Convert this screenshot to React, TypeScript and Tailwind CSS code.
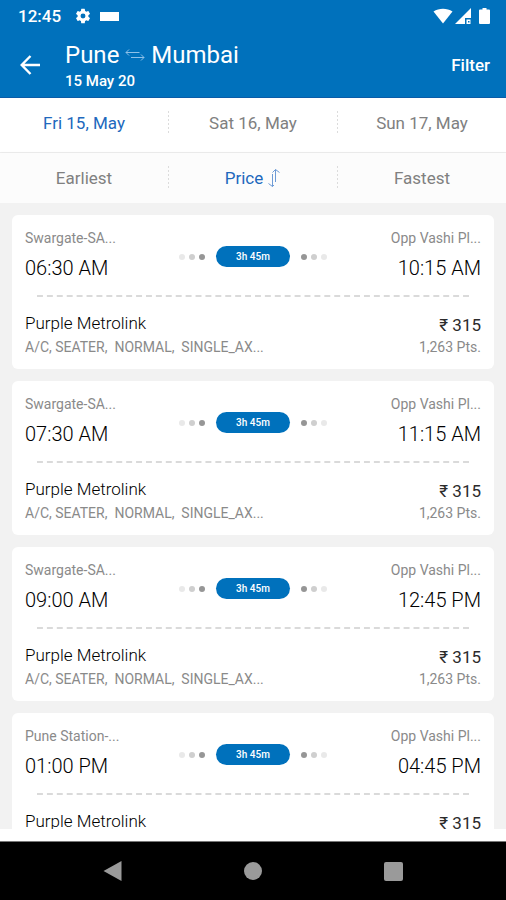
import React from 'react';

interface Trip {
  id: number;
  from: string;
  departs: string;
  to: string;
  arrives: string;
  duration: string;
  operator: string;
  features: string;
  price: string;
  points: string;
}

const base = {
  to: 'Opp Vashi Pl...',
  duration: '3h 45m',
  operator: 'Purple Metrolink',
  features: 'A/C, SEATER,  NORMAL,  SINGLE_AX...',
  price: '₹ 315',
  points: '1,263 Pts.',
};

const trips: Trip[] = [
  { ...base, id: 1, from: 'Swargate-SA...', departs: '06:30 AM', arrives: '10:15 AM' },
  { ...base, id: 2, from: 'Swargate-SA...', departs: '07:30 AM', arrives: '11:15 AM' },
  { ...base, id: 3, from: 'Swargate-SA...', departs: '09:00 AM', arrives: '12:45 PM' },
  { ...base, id: 4, from: 'Pune Station-...', departs: '01:00 PM', arrives: '04:45 PM' },
];

const StatusBar: React.FC = () => (
  <div className="flex h-8 items-center justify-between pl-[18px] pr-4 text-[17px] leading-5 font-medium">
    <div className="flex items-center">
      <span>12:45</span>
      <svg className="ml-[13px] h-[18px] w-[18px]" viewBox="0 0 24 24" fill="currentColor">
        <path d="M19.14 12.94c.04-.3.06-.61.06-.94s-.02-.64-.07-.94l2.03-1.58a.49.49 0 0 0 .12-.61l-1.92-3.32a.49.49 0 0 0-.59-.22l-2.39.96a7 7 0 0 0-1.62-.94l-.36-2.54A.48.48 0 0 0 13.92 2.4h-3.84a.47.47 0 0 0-.47.41l-.36 2.54c-.59.24-1.13.57-1.62.94l-2.39-.96a.48.48 0 0 0-.59.22L2.74 8.87a.47.47 0 0 0 .12.61l2.03 1.58c-.05.3-.09.63-.09.94s.02.64.07.94l-2.03 1.58a.49.49 0 0 0-.12.61l1.92 3.32c.12.22.37.29.59.22l2.39-.96c.5.38 1.03.7 1.62.94l.36 2.54c.05.24.24.41.48.41h3.84c.24 0 .44-.17.47-.41l.36-2.54c.59-.24 1.13-.56 1.62-.94l2.39.96c.22.08.47 0 .59-.22l1.92-3.32a.47.47 0 0 0-.12-.61zM12 15.3a3.3 3.3 0 1 1 0-6.6 3.3 3.3 0 0 1 0 6.6z" />
      </svg>
      <span className="ml-2 h-[9px] w-[19px] bg-white" />
    </div>
    <div className="flex items-center">
      <svg className="h-4 w-5" viewBox="0 0 20 16" fill="currentColor">
        <path d="M.5 3.500C6 -.2 14 -.2 19.500 3.500L10 15.500z" />
      </svg>
      <svg className="ml-[2px] h-4 w-4" viewBox="0 0 16 16" fill="currentColor">
        <path d="M16 0v10h-6v6H0z" />
        <path d="M11.500 11.500h4V16h-4zM13 13v1.500h1.500V13z" fillRule="evenodd" />
      </svg>
      <svg className="ml-2 h-4 w-[11px]" viewBox="0 0 11 16" fill="currentColor">
        <path d="M3.500 0h4v1.600H10a1 1 0 0 1 1 1V15a1 1 0 0 1-1 1H1a1 1 0 0 1-1-1V2.600a1 1 0 0 1 1-1h2.500z" />
      </svg>
    </div>
  </div>
);

const Header: React.FC = () => (
  <header className="shrink-0 border-b border-[#0a5ca8] bg-[#0071bc] text-white">
    <StatusBar />
    <div className="flex items-center pt-[7px] pr-4 pb-[6px] pl-5">
      <button type="button" aria-label="Back">
        <svg className="h-5 w-5" viewBox="0 0 20 20" fill="none" stroke="currentColor" strokeWidth="2.400">
          <path d="M20 10H2M10.500 1L1.700 10l8.800 9" />
        </svg>
      </button>
      <div className="ml-[25px]">
        <h1 className="flex items-center text-2xl leading-8">
          <span>Pune</span>
          <svg className="mx-[6px] h-3 w-5" viewBox="0 0 20 12" fill="none" stroke="#8ec1e8" strokeWidth="1">
            <path d="M4 .5L1 3.500l3 3M1 3.500h13.500M16 5.500l3 3-3 3M19 8.500H6" />
          </svg>
          <span>Mumbai</span>
        </h1>
        <p className="text-[15px] leading-5 font-medium">15 May 20</p>
      </div>
      <button type="button" className="ml-auto text-[17px] leading-5 font-medium">
        Filter
      </button>
    </div>
  </header>
);

const Divider: React.FC = () => (
  <span className="h-6 w-px bg-[repeating-linear-gradient(180deg,#dcdcdc_0_2px,transparent_2px_4px)]" />
);

const tabClass = 'flex flex-1 items-center justify-center';

const Tabs: React.FC = () => (
  <nav className="shrink-0 text-[17px] leading-5 text-[#808080]">
    <div className="flex h-[55px] items-center border-b border-[#eeeeee] bg-white pb-[5px]">
      <button type="button" className={`${tabClass} text-[#2168bd]`}>Fri 15, May</button>
      <Divider />
      <button type="button" className={tabClass}>Sat 16, May</button>
      <Divider />
      <button type="button" className={tabClass}>Sun 17, May</button>
    </div>
    <div className="flex h-[50px] items-center bg-[#fcfcfc] shadow-sm">
      <button type="button" className={tabClass}>Earliest</button>
      <Divider />
      <button type="button" className={`${tabClass} text-[#2168bd]`}>
        Price
        <svg className="ml-1 h-5 w-[14px]" viewBox="0 0 14 20" fill="none" stroke="#6e9bd6" strokeWidth="1">
          <path d="M5.500 6v12.500M1.500 15.500l4 3 1.500-1.500M8.500 14V1.500M5.500 4.500l3-3 4 3" />
        </svg>
      </button>
      <Divider />
      <button type="button" className={tabClass}>Fastest</button>
    </div>
  </nav>
);

const Duration: React.FC<{ label: string }> = ({ label }) => (
  <div className="flex items-center gap-[11px]">
    <div className="flex gap-1">
      <span className="h-[6px] w-[6px] rounded-full bg-[#e9e9e9]" />
      <span className="h-[6px] w-[6px] rounded-full bg-[#cfcfcf]" />
      <span className="h-[6px] w-[6px] rounded-full bg-[#969696]" />
    </div>
    <span className="flex h-[21px] w-[74px] items-center justify-center rounded-full bg-[#0071bc] text-[10px] leading-4 font-medium text-white">
      {label}
    </span>
    <div className="flex gap-1">
      <span className="h-[6px] w-[6px] rounded-full bg-[#969696]" />
      <span className="h-[6px] w-[6px] rounded-full bg-[#cfcfcf]" />
      <span className="h-[6px] w-[6px] rounded-full bg-[#e9e9e9]" />
    </div>
  </div>
);

const TripCard: React.FC<{ trip: Trip }> = ({ trip }) => (
  <li className="shrink-0 rounded-md bg-white px-[13px] pt-[13px] pb-[10px]">
    <div className="grid grid-cols-[1fr_auto_1fr]">
      <div>
        <p className="text-sm leading-5 text-[#8a8a8a]">{trip.from}</p>
        <p className="mt-2 text-xl leading-6 font-light text-black">{trip.departs}</p>
      </div>
      <div className="pt-[18px]">
        <Duration label={trip.duration} />
      </div>
      <div className="text-right">
        <p className="text-sm leading-5 text-[#8a8a8a]">{trip.to}</p>
        <p className="mt-2 text-xl leading-6 font-light text-black">{trip.arrives}</p>
      </div>
    </div>
    <div className="mx-3 mt-[15px]">
      <svg className="block h-[2px] w-full" fill="none" stroke="#dadada" strokeWidth="2">
        <line x1="0" y1="1" x2="100%" y2="1" pathLength={218} strokeDasharray="3 2" />
      </svg>
    </div>
    <div className="mt-[14px] flex items-end justify-between">
      <div>
        <p className="text-[17px] leading-6 font-light text-black">{trip.operator}</p>
        <p className="text-sm leading-6 whitespace-pre text-[#8a8a8a]">{trip.features}</p>
      </div>
      <div className="text-right">
        <p className="text-[17px] leading-5 text-[#2b2b2b]">{trip.price}</p>
        <p className="text-sm leading-6 text-[#8a8a8a]">{trip.points}</p>
      </div>
    </div>
  </li>
);

const NavBar: React.FC = () => (
  <footer className="grid h-[59px] shrink-0 grid-cols-3 items-center border-t border-[#777777] bg-black px-[43px] text-[#9a9a9a]">
    <button type="button" aria-label="Back" className="flex justify-center">
      <svg className="h-5 w-5" viewBox="0 0 20 20" fill="currentColor">
        <path d="M18.500 0v20L.5 10z" />
      </svg>
    </button>
    <button type="button" aria-label="Home" className="flex justify-center">
      <span className="h-[18px] w-[18px] rounded-full bg-[#9a9a9a]" />
    </button>
    <button type="button" aria-label="Recent apps" className="flex justify-center">
      <span className="h-[19px] w-[19px] rounded-xs bg-[#9a9a9a]" />
    </button>
  </footer>
);

export default function App() {
  return (
    <div className="flex h-screen flex-col bg-white font-['Roboto',sans-serif]">
      <Header />
      <Tabs />
      <main className="min-h-0 flex-1 overflow-hidden bg-[#f2f2f2]">
        <ul className="flex flex-col gap-3 p-3">
          {trips.map((trip) => (
            <TripCard key={trip.id} trip={trip} />
          ))}
        </ul>
      </main>
      <div className="h-3 shrink-0 bg-white" />
      <NavBar />
    </div>
  );
}
